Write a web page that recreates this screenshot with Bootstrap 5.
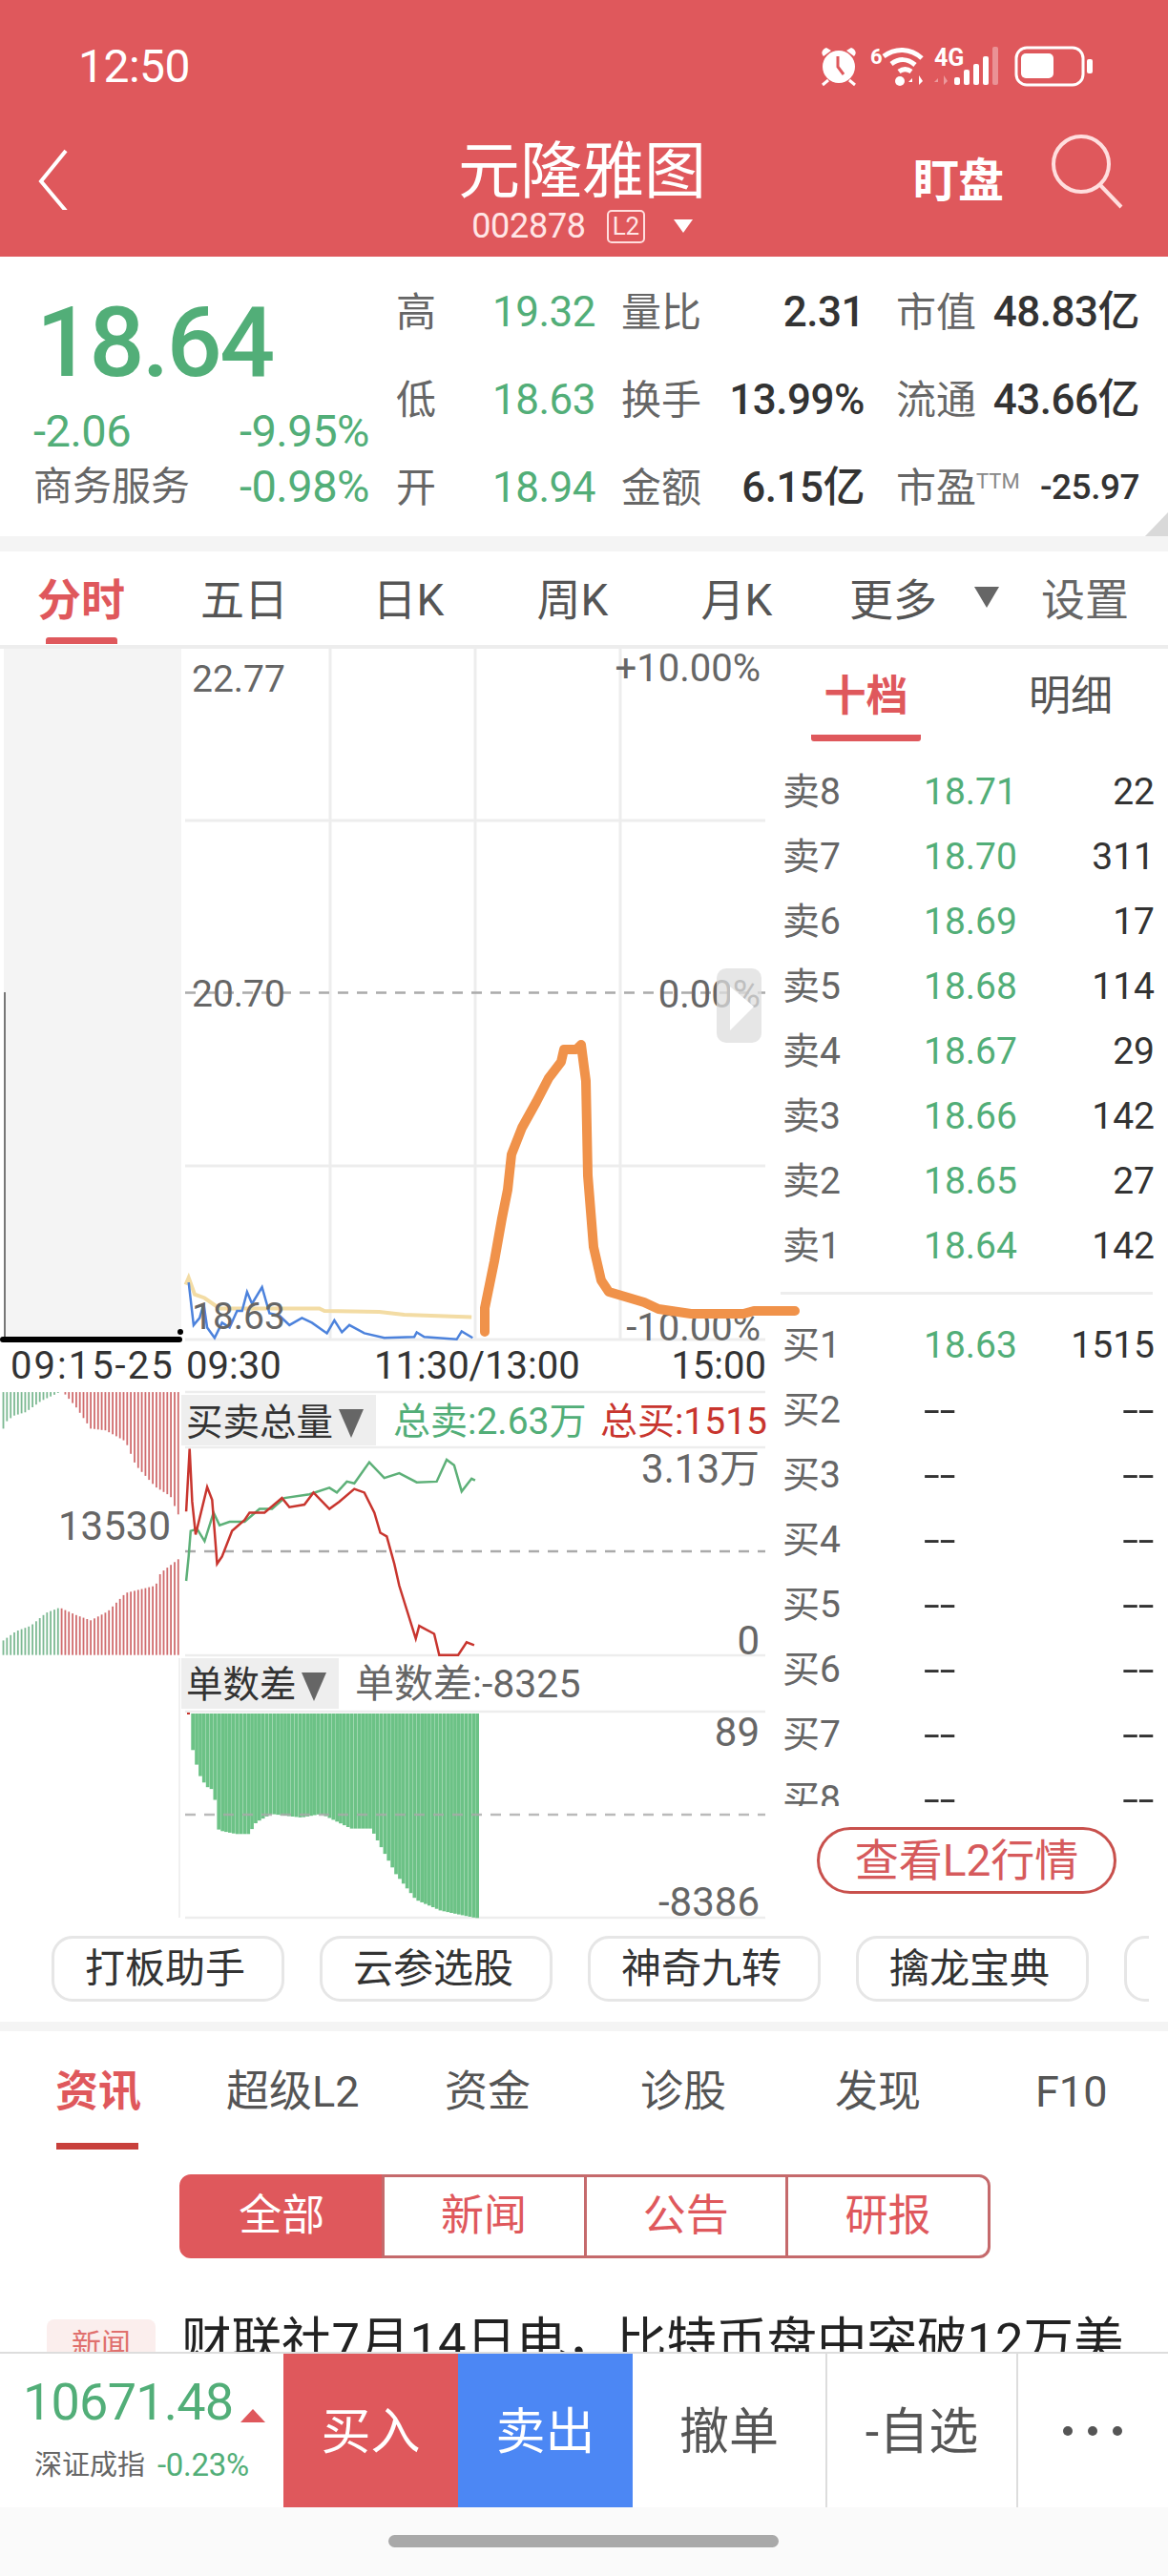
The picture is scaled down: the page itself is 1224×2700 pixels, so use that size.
<!DOCTYPE html>
<html lang="zh-CN">
<head>
    <meta charset="UTF-8">
    <meta name="viewport" content="width=device-width, initial-scale=1.0">
    <title>元隆雅图</title>
    <link href="https://cdn.jsdelivr.net/npm/bootstrap@5.3.0/dist/css/bootstrap.min.css" rel="stylesheet">
    <script src="https://cdn.jsdelivr.net/npm/bootstrap@5.3.0/dist/js/bootstrap.bundle.min.js"></script>
    <style>
        :root { --zs-red: #df585c; --zs-green: #52ae78; --zs-line: #ededed; }
        html, body { margin: 0; background: #fff; }
        body { width: 1224px; height: 2700px; overflow: hidden; font-family: Roboto, "Noto Sans CJK SC", sans-serif; color: #333; }
        .up-green { color: var(--zs-green); }
        .grey-txt { color: #666; }

        .top-bar { background: var(--zs-red); height: 269px; color: #fff; }
        .status-row { height: 130px; padding: 41px 76px 0 82px; }
        .clock { font-size: 48px; line-height: 46px; letter-spacing: -.5px; margin-top: 6px; }
        .head-row { height: 139px; display: grid; grid-template-columns: 1fr auto 1fr; padding: 0 44px 0 40px; }
        .stock-name { font-size: 65px; line-height: 70px; margin-top: 15px; text-align: center; }
        .stock-code { font-size: 36px; line-height: 44px; color: #ffe6e6; letter-spacing: -.3px; }
        .l2-tag { border: 2px solid #ffdede; border-radius: 5px; font-size: 26px; line-height: 31px; padding: 0 4px; margin: 0 30px 0 22px; }
        .tri-small { width: 0; height: 0; border-left: 10px solid transparent; border-right: 10px solid transparent; border-top: 14px solid #fff; }
        .watch-btn { font-size: 48px; font-weight: 700; letter-spacing: -1px; margin-right: 46px; }
        .search-ico { margin-right: 3px; }

        .quote-box { height: 293px; position: relative; }
        .price-col { width: 415px; padding: 39px 28px 0 35px; }
        .last-price { font-size: 102px; line-height: 102px; font-weight: 500; padding-left: 3px; letter-spacing: -2.500px; }
        .price-row { font-size: 47px; line-height: 58px; white-space: nowrap; letter-spacing: -.5px; }
        .price-first { margin-top: 13px; }
        .sector-name { font-size: 41px; letter-spacing: 0; }
        .quote-grid { display: grid; grid-template-columns: 101px 135px 100px 155px 132px 156px; grid-auto-rows: 92px; padding-top: 12px; font-size: 44px; align-items: center; white-space: nowrap; letter-spacing: -.5px; }
        .q-label { color: #666; font-size: 42px; letter-spacing: 0; }
        .q-num { text-align: right; font-weight: 500; }
        .q-pad { padding-left: 33px; }
        .q-pe { font-size: 37px; }
        .q-ttm { font-size: 22px; color: #888; vertical-align: 14px; }
        .corner-fold { position: absolute; right: 0; bottom: 0; width: 0; height: 0; border-left: 24px solid transparent; border-bottom: 25px solid #d9d9d9; }
        .grey-band { background: #f4f4f4; }
        .band-top { height: 16px; }
        .band-mid { height: 10px; }

        .period-tabs { height: 102px; border-bottom: 4px solid var(--zs-line); font-size: 46px; }
        .period-tab { width: 172px; height: 98px; line-height: 102px; text-align: center; position: relative; color: #555; }
        .period-on { color: var(--zs-red); font-weight: 700; width: 170px; }
        .period-more { width: 156px; }
        .period-set { line-height: 102px; height: 98px; }
        .tab-mark { position: absolute; left: 48px; bottom: 1px; width: 75px; height: 7px; border-radius: 3px 3px 0 0; background: var(--zs-red); }
        .tri-more { border-left: 13px solid transparent; border-right: 13px solid transparent; border-top: 22px solid #666; width: 0; height: 0; margin: 0 44px 2px 7px; }

        .market-row { height: 1330px; }
        .chart-col { width: 810px; flex: none; position: relative; z-index: 2; }
        .chart-svg { display: block; overflow: visible; font-family: Roboto, "Noto Sans CJK SC", sans-serif; }
        .book-col { width: 414px; flex: none; }
        .book-tabs { height: 97px; font-size: 44px; }
        .book-tab { position: relative; text-align: center; }
        .book-on { width: 115px; margin-left: 40px; color: var(--zs-red); font-weight: 700; height: 97px; line-height: 100px; border-bottom: 7px solid var(--zs-red); border-radius: 0 0 3px 3px; }
        .book-off { margin-left: 113px; color: #555; line-height: 100px; height: 97px; }
        .book-list { height: 1116px; overflow: hidden; padding-top: 19px; }
        .book-row { height: 68px; font-size: 39px; padding: 0 14px 0 10px; color: #333; }
        .book-lbl { width: 148px; color: #666; white-space: nowrap; }
        .book-price { width: 110px; }
        .book-vol { flex: 1; text-align: right; }
        .no-quote { display: inline-block; transform: scaleX(1.550); transform-origin: left center; }
        .book-vol .no-quote { transform-origin: right center; }
        .book-sep { height: 3px; background: var(--zs-line); margin: 14px 16px 19px 8px; }
        .l2-btn { width: 314px; height: 70px; margin: 22px 0 0 46px; padding: 0; border: 3px solid #c8504c; border-radius: 35px; color: #d65a5c; font-size: 46px; line-height: 62px; background: #fff; }

        .chips { height: 109px; padding: 19px 0 0 54px; gap: 37px; overflow: hidden; width: 1204px; }
        .chip-btn { flex: none; width: 244px; height: 69px; padding: 0 6px 0 0; border: 3px solid #e6e6e6; border-radius: 22px; font-size: 42px; line-height: 61px; color: #333; background: #fff; }

        .news-box { height: 336px; overflow: hidden; }
        .news-tabs { height: 133px; font-size: 45px; color: #555; position: relative; }
        .news-tab { position: absolute; top: 36px; line-height: 56px; white-space: nowrap; }
        .news-on { color: var(--zs-red); font-weight: 700; }
        .news-mark { position: absolute; left: 59px; top: 117px; width: 86px; height: 7px; background: #c8403c; }
        .seg-group { margin: 17px 0 0 188px; width: 850px; height: 88px; }
        .seg-btn { width: 215px; height: 88px; padding: 0; font-size: 45px; line-height: 80px; color: var(--zs-red); border: 3px solid #c56a6c; border-radius: 0; background: #fff; margin-left: -3px; }
        .seg-btn:first-child { margin-left: 0; border-radius: 12px 0 0 12px; }
        .seg-btn:last-child { border-radius: 0 12px 12px 0; }
        .seg-on { background: var(--zs-red); color: #fff; border-color: var(--zs-red); }
        .news-line { padding: 64px 0 0 49px; }
        .news-kind { width: 114px; height: 80px; flex: none; background: #fbeeed; color: #e0706e; border-radius: 8px; font-size: 31px; text-align: center; line-height: 54px; margin-right: 27px; }
        .news-title { font-size: 52.500px; line-height: 60px; color: #222; white-space: nowrap; margin-top: -7px; }

        .action-bar { height: 163px; border-top: 2px solid #ddd; }
        .index-box { width: 297px; flex: none; padding: 21px 0 0 24px; }
        .index-val { font-size: 54px; line-height: 60px; letter-spacing: -.8px; }
        .index-tri { border-left: 13px solid transparent; border-right: 13px solid transparent; border-bottom: 14px solid var(--zs-red); width: 0; height: 0; margin: 0 0 9px 8px; }
        .index-sub { line-height: 40px; margin: 16px 0 0 12px; gap: 13px; }
        .index-name { font-size: 29px; }
        .index-pct { font-size: 33px; letter-spacing: -.3px; }
        .act-cell { height: 161px; font-size: 52px; line-height: 165px; text-align: center; color: #555; }
        .act-buy { width: 183px; background: var(--zs-red); color: #fff; }
        .act-sell { width: 183px; background: #4c87f4; color: #fff; }
        .act-plain { width: 202px; }
        .act-sep { width: 200px; border-left: 2px solid #ddd; }
        .act-more { width: 158px; border-left: 2px solid #ddd; gap: 16px; }
        .act-dot { width: 10px; height: 10px; border-radius: 50%; background: #555; }
        .home-strip { height: 72px; background: #fafafa; padding-top: 29px; }
        .home-pill { width: 409px; height: 13px; margin-left: 407px; border-radius: 7px; background: #a9a9a9; }
    </style>
</head>
<body>
    <div class="top-bar">
        <div class="status-row d-flex justify-content-between align-items-start">
            <div class="clock">12:50</div>
            <svg width="290" height="52" viewBox="860 42 290 52" fill="#fff">
                <!-- alarm -->
                <circle cx="881" cy="71" r="17"/>
                <path d="M865 60c-3-3-2-7 3-9l5 3zM897 60c3-3 2-7-3-9l-5 3z"/>
                <path d="M870 85l-6 5M892 85l6 5" stroke="#fff" stroke-width="3"/>
                <path d="M880 60v11l6 8" stroke="#df585c" stroke-width="3" fill="none"/>
                <!-- wifi -->
                <text x="914" y="68" font-size="22" font-weight="700" fill="#fff">6</text>
                <path d="M928 60c12-9 28-9 40 2M936 68c8-6 17-6 25 1M944 76c4-3 9-3 13 0" stroke="#fff" stroke-width="5" fill="none"/>
                <circle cx="945" cy="86" r="5"/>
                <path d="M958 83l-4 4h4zM960 80v10M965 80v10l4-4z"/>
                <!-- 4G and signal -->
                <text x="981" y="70" font-size="25" font-weight="700" fill="#fff">4G</text>
                <path d="M985 83l-4 4h4zM987 80v10M991 80v10l4-4z" opacity=".4"/>
                <rect x="1002" y="82" width="6" height="8" rx="2"/>
                <rect x="1012" y="74" width="6" height="16" rx="2"/>
                <rect x="1022" y="68" width="6" height="22" rx="2"/>
                <rect x="1032" y="60" width="6" height="30" rx="2"/>
                <rect x="1042" y="50" width="6" height="40" rx="2" opacity=".35"/>
                <!-- battery -->
                <rect x="1067" y="51" width="70" height="39" rx="11" fill="none" stroke="#fff" stroke-width="3"/>
                <rect x="1072" y="57" width="34" height="26" rx="5"/>
                <rect x="1141" y="63" width="6" height="15" rx="2"/>
            </svg>
        </div>
        <div class="head-row">
            <div class="d-flex align-items-start">
                <svg class="mt-4" width="32" height="66" viewBox="0 0 32 66"><path d="M29 4 3 36l26 31" fill="none" stroke="#fff" stroke-width="4"/></svg>
            </div>
            <div>
                <div class="stock-name">元隆雅图</div>
                <div class="stock-code d-flex align-items-center justify-content-center">002878<span class="l2-tag">L2</span><span class="tri-small"></span></div>
            </div>
            <div class="d-flex justify-content-end align-items-start">
                <div class="watch-btn mt-4">盯盘</div>
                <svg class="search-ico mt-1" width="80" height="88" viewBox="0 0 80 88"><circle cx="36" cy="38" r="29" fill="none" stroke="#ffdede" stroke-width="4"/><path d="M56 60l22 23" stroke="#ffdede" stroke-width="4"/></svg>
            </div>
        </div>
    </div>

    <div class="quote-box d-flex">
        <div class="price-col">
            <div class="last-price up-green">18.64</div>
            <div class="price-row price-first up-green d-flex justify-content-between"><span>-2.06</span><span>-9.95%</span></div>
            <div class="price-row d-flex justify-content-between"><span class="grey-txt sector-name">商务服务</span><span class="up-green">-0.98%</span></div>
        </div>
        <div class="quote-grid">
            <span class="q-label">高</span><span class="up-green">19.32</span><span class="q-label">量比</span><span class="q-num">2.31</span><span class="q-label q-pad">市值</span><span class="q-num">48.83亿</span>
            <span class="q-label">低</span><span class="up-green">18.63</span><span class="q-label">换手</span><span class="q-num">13.99%</span><span class="q-label q-pad">流通</span><span class="q-num">43.66亿</span>
            <span class="q-label">开</span><span class="up-green">18.94</span><span class="q-label">金额</span><span class="q-num">6.15亿</span><span class="q-label q-pad">市盈<span class="q-ttm">TTM</span></span><span class="q-num q-pe">-25.97</span>
        </div>
        <div class="corner-fold"></div>
    </div>
    <div class="grey-band band-top"></div>

    <div class="period-tabs d-flex align-items-center">
        <div class="period-tab period-on">分时<span class="tab-mark"></span></div>
        <div class="period-tab">五日</div>
        <div class="period-tab">日K</div>
        <div class="period-tab">周K</div>
        <div class="period-tab">月K</div>
        <div class="period-tab period-more">更多</div>
        <span class="tri-more"></span>
        <div class="grey-txt period-set">设置</div>
    </div>

    <div class="market-row d-flex">
        <div class="chart-col">
            <svg class="chart-svg" width="810" height="1330" viewBox="0 680 810 1330">
                <!-- left depth panel -->
                <rect x="4" y="680" width="186" height="725" fill="#f4f4f4"/>
                <path d="M5 1040v365" stroke="#777" stroke-width="2"/>
                <path d="M3 1404h185" stroke="#000" stroke-width="6" stroke-linecap="round"/>
                <circle cx="189" cy="1396" r="3" fill="#000"/>
                <g id="depthBars"></g>
                <path d="M188 1738v272" stroke="#f0f0f0" stroke-width="2"/>
                <text x="179" y="1599" font-size="42" fill="#666" text-anchor="end" dominant-baseline="central">13530</text>

                <!-- price panel grid -->
                <path d="M346 680v724M498 680v724M650 680v724" stroke="#ededed" stroke-width="3"/>
                <path d="M194 860h608M194 1222h608M194 1404h608" stroke="#ededed" stroke-width="3"/>
                <path d="M194 1040.500h608" stroke="#aaa" stroke-width="2.500" stroke-dasharray="11 9"/>
                <polyline id="avgLine" fill="none" stroke="#f3dca4" stroke-width="4"/>
                <polyline id="priceLine" fill="none" stroke="#4c82dc" stroke-width="2.500"/>
                <g font-size="39" fill="#666" dominant-baseline="central">
                    <text x="201" y="712">22.77</text>
                    <text x="201" y="1042">20.70</text>
                    <text x="201" y="1380">18.63</text>
                    <text x="797" y="700" text-anchor="end" font-size="40">+10.00%</text>
                    <text x="797" y="1042" text-anchor="end" font-size="40">0.00%</text>
                    <text x="797" y="1391" text-anchor="end" font-size="40">-10.00%</text>
                </g>
                <rect x="751" y="1015" width="47" height="78" rx="10" fill="#ddd" opacity=".75"/>
                <path d="M765 1034l25 21-25 25z" fill="#fff"/>
                <g font-size="40" fill="#333" dominant-baseline="central">
                    <text x="11" y="1431" letter-spacing="2">09:15-25</text>
                    <text x="195" y="1431">09:30</text>
                    <text x="392" y="1431">11:30/13:00</text>
                    <text x="803" y="1431" text-anchor="end">15:00</text>
                </g>

                <!-- volume panel -->
                <path d="M194 1459h608M194 1517h608M194 1735h608" stroke="#ededed" stroke-width="2.500"/>
                <rect x="190" y="1462" width="204" height="53" fill="#eee"/>
                <text x="195" y="1490" font-size="38.500" fill="#333" dominant-baseline="central">买卖总量</text>
                <path d="M355 1477h26l-13 30z" fill="#666"/>
                <text x="412" y="1490" font-size="39" fill="#52ae78" dominant-baseline="central">总卖:2.63万</text>
                <text x="804" y="1490" font-size="39" fill="#c8352e" text-anchor="end" dominant-baseline="central">总买:1515</text>
                <path d="M194 1626h608" stroke="#aaa" stroke-width="2.500" stroke-dasharray="11 9"/>
                <polyline id="sellLine" fill="none" stroke="#5db078" stroke-width="2.500"/>
                <polyline id="buyLine" fill="none" stroke="#c8352e" stroke-width="2.500"/>
                <text x="796" y="1539" font-size="42" fill="#666" text-anchor="end" dominant-baseline="central">3.13万</text>
                <text x="796" y="1719" font-size="42" fill="#666" text-anchor="end" dominant-baseline="central">0</text>

                <!-- order count panel -->
                <path d="M194 1794h608M194 2010h608" stroke="#ededed" stroke-width="2.500"/>
                <rect x="190" y="1738" width="165" height="53" fill="#eee"/>
                <text x="195" y="1765" font-size="38.500" fill="#333" dominant-baseline="central">单数差</text>
                <path d="M316 1753h26l-13 30z" fill="#666"/>
                <text x="372" y="1765" font-size="41" fill="#666" dominant-baseline="central">单数差:-8325</text>
                <g id="diffBars"></g>
                <path d="M194 1902h608" stroke="#aaa" stroke-width="2.500" stroke-dasharray="11 9" opacity=".8"/>
                <text x="796" y="1815" font-size="42" fill="#666" text-anchor="end" dominant-baseline="central">89</text>
                <text x="796" y="1993" font-size="42" fill="#666" text-anchor="end" dominant-baseline="central">-8386</text>

                <!-- hand drawn line -->
                <polyline fill="none" stroke="#f0924a" stroke-width="10" stroke-linecap="round" stroke-linejoin="round"
                    points="508,1396 508,1371 518,1322 526,1277 532,1247 536,1210 547,1182 562,1155 575,1130 588,1113 591,1100 604,1100 609,1095 612,1118 614,1133 616,1232 622,1307 630,1342 638,1354 675,1365 690,1372 724,1377 779,1377 790,1374 833,1374"/>
            </svg>
        </div>

        <div class="book-col">
            <div class="book-tabs d-flex">
                <div class="book-tab book-on">十档</div>
                <div class="book-tab book-off">明细</div>
            </div>
            <div class="book-list" id="bookList"></div>
            <button type="button" class="btn l2-btn">查看L2行情</button>
        </div>
    </div>

    <div class="chips d-flex">
        <button type="button" class="btn chip-btn">打板助手</button>
        <button type="button" class="btn chip-btn">云参选股</button>
        <button type="button" class="btn chip-btn">神奇九转</button>
        <button type="button" class="btn chip-btn">擒龙宝典</button>
        <button type="button" class="btn chip-btn"></button>
    </div>
    <div class="grey-band band-mid"></div>

    <div class="news-box">
        <div class="news-tabs">
            <span class="news-tab news-on" style="left:58px">资讯</span>
            <span class="news-tab" style="left:237px">超级L2</span>
            <span class="news-tab" style="left:466px">资金</span>
            <span class="news-tab" style="left:671px">诊股</span>
            <span class="news-tab" style="left:875px">发现</span>
            <span class="news-tab" style="left:1085px">F10</span>
            <span class="news-mark"></span>
        </div>
        <div class="seg-group d-flex">
            <button type="button" class="btn seg-btn seg-on">全部</button>
            <button type="button" class="btn seg-btn">新闻</button>
            <button type="button" class="btn seg-btn">公告</button>
            <button type="button" class="btn seg-btn">研报</button>
        </div>
        <div class="news-line d-flex">
            <div class="news-kind">新闻</div>
            <div class="news-title">财联社7月14日电，比特币盘中突破12万美</div>
        </div>
    </div>

    <div class="action-bar d-flex">
        <div class="index-box">
            <div class="d-flex align-items-end"><span class="index-val up-green">10671.48</span><span class="index-tri"></span></div>
            <div class="index-sub d-flex align-items-center"><span class="grey-txt index-name">深证成指</span><span class="up-green index-pct">-0.23%</span></div>
        </div>
        <div class="act-cell act-buy">买入</div>
        <div class="act-cell act-sell">卖出</div>
        <div class="act-cell act-plain">撤单</div>
        <div class="act-cell act-sep">-自选</div>
        <div class="act-cell act-more d-flex align-items-center justify-content-center"><span class="act-dot"></span><span class="act-dot"></span><span class="act-dot"></span></div>
    </div>
    <div class="home-strip"><div class="home-pill"></div></div>

    <script>
        // 十档
        const asks = [['卖8','18.71','22'],['卖7','18.70','311'],['卖6','18.69','17'],['卖5','18.68','114'],['卖4','18.67','29'],['卖3','18.66','142'],['卖2','18.65','27'],['卖1','18.64','142']];
        const bids = [['买1','18.63','1515'],['买2','--','--'],['买3','--','--'],['买4','--','--'],['买5','--','--'],['买6','--','--'],['买7','--','--'],['买8','--','--']];
        const cell = v => v === '--' ? '<span class="no-quote">--</span>' : v;
        const bookRow = r => `<div class="book-row d-flex align-items-center"><span class="book-lbl">${r[0]}</span><span class="book-price ${r[1] === '--' ? '' : 'up-green'}">${cell(r[1])}</span><span class="book-vol">${cell(r[2])}</span></div>`;
        document.getElementById('bookList').innerHTML = asks.map(bookRow).join('') + '<div class="book-sep"></div>' + bids.map(bookRow).join('');

        // 坐标是从参考图量出来的
        const sx = x => x / 1.912;
        const y2 = y => 670 + y / 2.01;
        const y3 = y => 1440 + y / 2.613;
        const toPts = (arr, fy) => arr.map(p => sx(p[0]).toFixed(1) + ',' + fy(p[1]).toFixed(1)).join(' ');

        document.getElementById('avgLine').setAttribute('points', toPts([[372,1360],[378,1345],[390,1380],[410,1388],[440,1410],[640,1410],[650,1415],[760,1417],[810,1423],[945,1428]], y2));
        document.getElementById('priceLine').setAttribute('points', toPts([[378,1355],[388,1445],[400,1430],[408,1400],[415,1450],[430,1472],[445,1440],[460,1450],[475,1415],[485,1415],[495,1375],[505,1400],[525,1365],[540,1420],[560,1425],[580,1445],[605,1430],[625,1440],[655,1462],[670,1435],[685,1460],[700,1445],[730,1462],[770,1472],[830,1470],[835,1460],[850,1470],[915,1475],[925,1458],[947,1472]], y2));
        document.getElementById('sellLine').setAttribute('points', toPts([[373,567],[378,500],[382,430],[395,425],[410,458],[428,380],[440,415],[460,405],[490,405],[520,370],[545,370],[570,340],[620,330],[660,312],[675,325],[695,295],[710,300],[740,242],[770,285],[800,272],[835,297],[875,295],[895,235],[910,250],[925,322],[945,287],[952,292]], y3));
        document.getElementById('buyLine').setAttribute('points', toPts([[373,377],[380,205],[385,350],[392,440],[400,395],[415,310],[425,345],[435,520],[445,500],[465,430],[490,400],[500,380],[530,380],[565,340],[580,365],[610,358],[628,325],[660,370],[680,350],[710,315],[730,325],[750,380],[762,435],[775,445],[790,520],[800,580],[833,725],[840,690],[870,712],[880,770],[918,770],[935,735],[950,743]], y3));

        const lerp = (env, x) => {
            for (let i = 1; i < env.length; i++) {
                if (x <= env[i][0]) {
                    const a = env[i - 1], b = env[i];
                    return a[1] + (b[1] - a[1]) * (x - a[0]) / (b[0] - a[0]);
                }
            }
            return env[env.length - 1][1];
        };

        // 竞价柱
        const topEnv = [[5,150],[12,130],[25,115],[50,105],[80,75],[100,62],[118,50],[125,50],[150,90],[180,150],[210,155],[250,185],[270,250],[310,310],[340,335],[355,385]];
        const lowEnv = [[5,730],[30,705],[60,690],[90,655],[118,640],[150,660],[180,675],[215,650],[250,600],[310,580],[320,545],[358,505]];
        let depth = '';
        for (let x = 5; x < 358; x += 7.3) {
            const c = x < 120 ? '#5ba877' : '#c4474a';
            depth += `<rect x="${sx(x).toFixed(1)}" y="${y3(50).toFixed(1)}" width="1.800" height="${((lerp(topEnv, x) - 50) / 2.613).toFixed(1)}" fill="${c}" opacity=".8"/>`;
            depth += `<rect x="${sx(x).toFixed(1)}" y="${y3(lerp(lowEnv, x)).toFixed(1)}" width="1.800" height="${((770 - lerp(lowEnv, x)) / 2.613).toFixed(1)}" fill="${c}" opacity=".8"/>`;
        }
        document.getElementById('depthBars').innerHTML = depth;

        // 单数差柱
        const diffEnv = [[383,1030],[395,1095],[410,1130],[425,1140],[435,1250],[470,1260],[495,1260],[510,1228],[540,1205],[600,1215],[640,1205],[700,1245],[740,1245],[790,1370],[830,1440],[880,1470],[950,1490]];
        let diff = '<rect x="196" y="1795" width="3" height="2" fill="#c8352e"/>';
        for (let x = 383; x < 953; x += 7.4) {
            diff += `<rect x="${sx(x).toFixed(1)}" y="1796" width="3.700" height="${((lerp(diffEnv, x) - 930) / 2.613).toFixed(1)}" fill="#6cc286"/>`;
        }
        document.getElementById('diffBars').innerHTML = diff;
    </script>
</body>
</html>
